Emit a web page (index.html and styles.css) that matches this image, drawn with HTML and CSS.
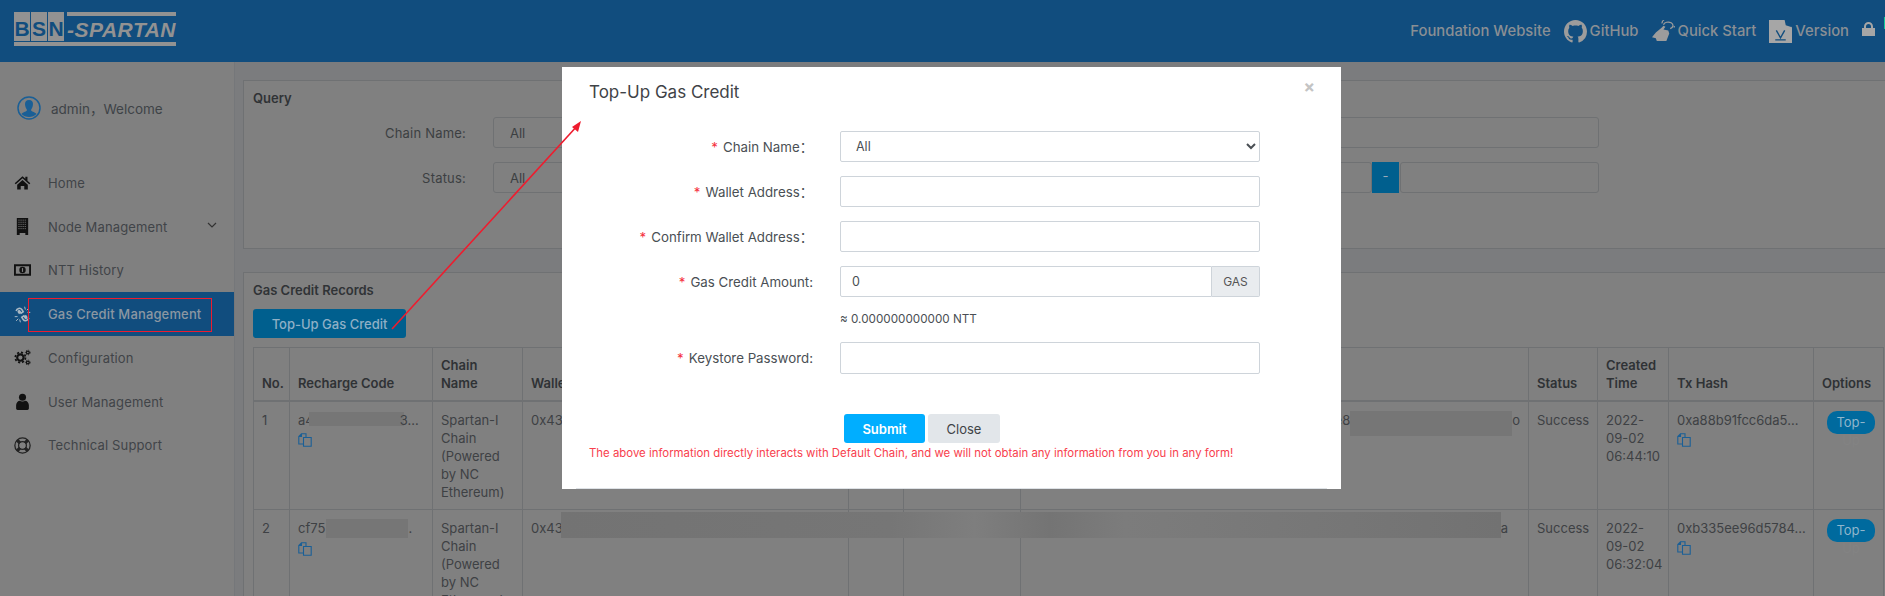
FILE: index.html

```html
<!DOCTYPE html>
<html lang="en">
<head>
<meta charset="UTF-8">
<title>BSN Spartan - Gas Credit Management</title>
<meta name="viewport" content="width=device-width, initial-scale=1.0">
<link rel="stylesheet" href="styles.css">
</head>
<body>
<header class="topbar">
  <div class="logo">
    <div class="logo-top">
      <span class="logo-box">B</span><span class="logo-box">S</span><span class="logo-box">N</span>
      <span class="logo-name">-SPARTAN</span>
    </div>
  </div>
  <nav class="toplinks">
    <a class="toplink">Foundation Website</a>
    <a class="toplink">
      <svg class="topicon" viewBox="0 0 16 16"><path fill="#9c9c9c" d="M8 0C3.58 0 0 3.58 0 8c0 3.54 2.29 6.53 5.47 7.59.4.07.55-.17.55-.38 0-.19-.01-.82-.01-1.49-2.01.37-2.53-.49-2.69-.94-.09-.23-.48-.94-.82-1.13-.28-.15-.68-.52-.01-.53.63-.01 1.08.58 1.23.82.72 1.21 1.87.87 2.33.66.07-.52.28-.87.51-1.07-1.78-.2-3.64-.89-3.64-3.95 0-.87.31-1.59.82-2.15-.08-.2-.36-1.02.08-2.12 0 0 .67-.21 2.2.82.64-.18 1.32-.27 2-.27.68 0 1.36.09 2 .27 1.53-1.04 2.2-.82 2.2-.82.44 1.1.16 1.92.08 2.12.51.56.82 1.27.82 2.15 0 3.07-1.87 3.75-3.65 3.95.29.25.54.73.54 1.48 0 1.07-.01 1.93-.01 2.2 0 .21.15.46.55.38A8.013 8.013 0 0016 8c0-4.42-3.58-8-8-8z"/></svg>
      GitHub
    </a>
    <a class="toplink">
      <svg class="topicon" viewBox="0 0 24 24"><path fill="#9c9c9c" d="M0 18l4-5 6-5 2-2 2 1-2 3 5 1 1 3-3 8H5l-1-3z"/><path fill="none" stroke="#9c9c9c" stroke-width="1.3" d="M12 5a5 3.6 0 1 1 7 4M10.500 3.500a8 5 0 1 1 12 4"/></svg>
      Quick Start
    </a>
    <a class="toplink">
      <svg class="topicon" viewBox="0 0 22 22"><path fill="#a6a6a6" d="M0 0h15l7 7v15H0z"/><path fill="#114d7e" d="M15 0l1 5 6 2-1-2-4-5z"/><path fill="none" stroke="#114d7e" stroke-width="1.300" d="M7 10l4 7 4-7M6 19h10"/></svg>
      Version
    </a>
    <svg class="lock" viewBox="0 0 13 14"><path fill="#a6a6a6" d="M0 6h13v8H0z"/><path fill="none" stroke="#a6a6a6" stroke-width="2" d="M3 7V4.500a3.500 3.500 0 0 1 7 0V7"/></svg>
  </nav>
  <span class="edge-mark"></span>
</header>

<div class="page">
  <aside class="sidebar">
    <div class="welcome">
      <svg class="avatar" viewBox="0 0 24 24"><circle cx="12" cy="12" r="11" fill="none" stroke="#1a5f96" stroke-width="1.500"/><path fill="#1a5f96" d="M12 4c-3 0-4 2-4 4 0 3 1.500 5 2 6 0 1.500-4 2-5.500 4 3.500 4 11.500 4 15 0-1.500-2-5.500-2.500-5.500-4 .5-1 2-3 2-6 0-2-1-4-4-4z"/></svg>
      <span>admin，Welcome</span>
    </div>
    <ul class="menu">
      <li class="menu-item">
        <svg class="menu-icon" viewBox="0 0 24 24"><path fill="#111" d="M12 3L1 13l1.500 1.500L12 6l9.500 8.500L23 13l-4-3.600V4h-3v2.700z"/><path fill="#111" d="M4.500 15L12 8.300l7.500 6.700v7h-5v-5h-5v5h-5z"/></svg>
        Home
      </li>
      <li class="menu-item">
        <svg class="menu-icon" viewBox="0 0 24 24"><path fill="#111" d="M4 0h16v24h-4v-3H8v3H4z"/><path fill="none" stroke="#808080" stroke-dasharray="2 1" d="M6 3h12M6 6h12M6 9h12M6 12h12M6 15h12"/></svg>
        Node Management
        <svg class="chevron" viewBox="0 0 10 6"><path fill="none" stroke="#333" stroke-width="1.200" d="M1 1l4 4 4-4"/></svg>
      </li>
      <li class="menu-item">
        <svg class="menu-icon menu-icon-wide" viewBox="0 0 18 12"><path fill="#111" d="M0 0h18v12H0zm2 2v8h14V2z"/><circle cx="9" cy="6" r="3.400" fill="#111"/><path fill="#808080" d="M8.400 4h1.200v4H8.400z"/></svg>
        NTT History
      </li>
      <li class="menu-item menu-item-active">
        <svg class="menu-icon" viewBox="0 0 24 24"><path fill="none" stroke="#a9b8c4" stroke-width="2.200" d="M3 7c1-4 6-5 8-2l2 3-3 2-2-3c-1-1-2 0-2 1l2 3M21 17c-1 4-6 5-8 2l-2-3 3-2 2 3c1 1 2 0 2-1l-2-3"/><path fill="none" stroke="#a9b8c4" stroke-width="1.400" d="M15 1l1 4M21 3l-3 3M23 9l-4 0M1 15l4 0M3 21l3-3M9 23l-1-4"/></svg>
        Gas Credit Management
      </li>
      <li class="menu-item">
        <svg class="menu-icon" viewBox="0 0 24 24"><circle cx="9" cy="12" r="4.500" fill="none" stroke="#111" stroke-width="3"/><circle cx="9" cy="12" r="7.200" fill="none" stroke="#111" stroke-width="2.400" stroke-dasharray="3 2.650"/><circle cx="19.500" cy="5" r="2" fill="none" stroke="#111" stroke-width="1.800"/><circle cx="19.500" cy="19" r="2" fill="none" stroke="#111" stroke-width="1.800"/><circle cx="19.500" cy="5" r="3.400" fill="none" stroke="#111" stroke-width="1" stroke-dasharray="1.500 1.500"/><circle cx="19.500" cy="19" r="3.400" fill="none" stroke="#111" stroke-width="1" stroke-dasharray="1.500 1.500"/></svg>
        Configuration
      </li>
      <li class="menu-item">
        <svg class="menu-icon" viewBox="0 0 24 24"><circle cx="12" cy="6" r="5" fill="#111"/><path fill="#111" d="M5 24c-1 0-2-1-2-2v-5c0-3 3-6 5-6 2 1.500 6 1.500 8 0 2 0 5 3 5 6v5c0 1-1 2-2 2z"/></svg>
        User Management
      </li>
      <li class="menu-item">
        <svg class="menu-icon" viewBox="0 0 24 24"><circle cx="12" cy="12" r="10.800" fill="none" stroke="#222" stroke-width="1.800"/><circle cx="12" cy="12" r="5.500" fill="none" stroke="#222" stroke-width="1.800"/><path stroke="#222" stroke-width="4.500" d="M4.500 4.500l4 4M19.500 4.500l-4 4M4.500 19.500l4-4M19.500 19.500l-4-4"/></svg>
        Technical Support
      </li>
    </ul>
  </aside>

  <main class="main">
    <section class="card query-card">
      <h3 class="card-title">Query</h3>
      <div class="query-row">
        <label class="query-label">Chain Name:</label>
        <input class="query-field" value="All" readonly>
      </div>
      <div class="query-row">
        <label class="query-label">Status:</label>
        <input class="query-field" value="All" readonly>
        <span class="range-dash">-</span>
        <input class="query-field query-end" readonly>
      </div>
    </section>

    <section class="card records-card">
      <h3 class="card-title">Gas Credit Records</h3>
      <button class="topup-btn">Top-Up Gas Credit</button>
      <div class="table-wrap">
        <table class="records">
          <colgroup>
            <col class="c-no"><col class="c-code"><col class="c-chain"><col class="c-wallet"><col class="c-a"><col class="c-b"><col class="c-c"><col class="c-status"><col class="c-time"><col class="c-hash"><col class="c-opt">
          </colgroup>
          <thead>
            <tr>
              <th>No.</th><th>Recharge Code</th><th>Chain<br>Name</th><th>Wallet Address</th><th></th><th></th><th></th><th>Status</th><th>Created<br>Time</th><th>Tx Hash</th><th>Options</th>
            </tr>
          </thead>
          <tbody>
            <tr>
              <td>1</td>
              <td>a4<span class="smudge smudge-a"></span>3…
                <svg class="copy" viewBox="0 0 14 14"><path fill="none" stroke="#1a5f96" stroke-width="1.100" d="M5 11H.8V3.500L3.500.8H8V4M5.500 4.500h3l4.700 0v8.700H5.500zM3.500.8v2.700H.8"/></svg>
              </td>
              <td>Spartan-I<br>Chain<br>(Powered<br>by NC<br>Ethereum)</td>
              <td>0x43</td><td></td><td></td>
              <td class="cell-end">ee8<span class="smudge smudge-b"></span>o</td>
              <td>Success</td>
              <td>2022-<br>09-02<br>06:44:10</td>
              <td>0xa88b91fcc6da5...
                <svg class="copy" viewBox="0 0 14 14"><path fill="none" stroke="#1a5f96" stroke-width="1.100" d="M5 11H.8V3.500L3.500.8H8V4M5.500 4.500h3l4.700 0v8.700H5.500zM3.500.8v2.700H.8"/></svg>
              </td>
              <td class="cell-opt"><a class="pill-btn">Top-<br><span class="pill-rest">Up</span></a></td>
            </tr>
            <tr>
              <td>2</td>
              <td>cf75<span class="smudge smudge-c"></span>.
                <svg class="copy" viewBox="0 0 14 14"><path fill="none" stroke="#1a5f96" stroke-width="1.100" d="M5 11H.8V3.500L3.500.8H8V4M5.500 4.500h3l4.700 0v8.700H5.500zM3.500.8v2.700H.8"/></svg>
              </td>
              <td>Spartan-I<br>Chain<br>(Powered<br>by NC<br>Ethereum)</td>
              <td>0x43</td><td></td><td></td>
              <td class="cell-end cell-end-2">a</td>
              <td>Success</td>
              <td>2022-<br>09-02<br>06:32:04</td>
              <td>0xb335ee96d5784...
                <svg class="copy" viewBox="0 0 14 14"><path fill="none" stroke="#1a5f96" stroke-width="1.100" d="M5 11H.8V3.500L3.500.8H8V4M5.500 4.500h3l4.700 0v8.700H5.500zM3.500.8v2.700H.8"/></svg>
              </td>
              <td class="cell-opt"><a class="pill-btn">Top-<br><span class="pill-rest">Up</span></a></td>
            </tr>
          </tbody>
        </table>
        <div class="row-smudge"></div>
      </div>
    </section>
  </main>
</div>

<div class="modal">
  <h2 class="modal-title">Top-Up Gas Credit</h2>
  <span class="modal-close">×</span>
  <form class="modal-form">
    <label class="form-label"><i>*</i>Chain Name：</label>
    <select class="form-field"><option>All</option></select>

    <label class="form-label"><i>*</i>Wallet Address：</label>
    <input class="form-field">

    <label class="form-label"><i>*</i>Confirm Wallet Address：</label>
    <input class="form-field">

    <label class="form-label"><i>*</i>Gas Credit Amount:</label>
    <div class="input-group">
      <input class="form-field group-input" value="0">
      <span class="group-addon">GAS</span>
    </div>

    <span></span>
    <div class="form-hint">≈ 0.000000000000 NTT</div>

    <label class="form-label"><i>*</i>Keystore Password:</label>
    <input class="form-field form-field-tall" type="password">
  </form>
  <div class="modal-actions">
    <button class="btn-submit">Submit</button>
    <button class="btn-close">Close</button>
  </div>
  <p class="modal-note">The above information directly interacts with Default Chain, and we will not obtain any information from you in any form!</p>
  <div class="modal-rule"></div>
</div>

<svg class="markup" viewBox="0 0 1885 596">
  <rect x="28.500" y="298.500" width="183" height="33" fill="none" stroke="#ee1c2e" stroke-width="1"/>
  <line x1="392" y1="329" x2="578" y2="125" stroke="#ee1c2e" stroke-width="1.600"/>
  <path fill="#ee1c2e" d="M581 121l-3 11-6-5z"/>
</svg>
</body>
</html>
```

FILE: styles.css

```css
html,body{margin:0;height:596px;overflow:hidden}
body{font-family:Inter,"Noto Sans CJK SC",sans-serif;font-size:13px;color:#3c3f42;background:#808080}

/* top bar */
.topbar{height:62px;background:#114d7e;display:flex;align-items:center;justify-content:space-between;padding:0 10px 0 14px;box-sizing:border-box;position:relative}
.logo{width:162px;height:34px;border-bottom:4px solid #929292;box-sizing:border-box;margin-top:-4px}
.logo-top{display:flex;height:29px;gap:1px}
.logo-box{width:17.500px;background:#929292;color:#114d7e;font:bold 21px/33px "Liberation Sans",sans-serif;text-align:center}
.logo-name{margin-left:2px;flex:1;border-top:4px solid #929292;color:#929292;font:italic bold 21px/27px "Liberation Sans",sans-serif;letter-spacing:.5px;white-space:nowrap}
.toplinks{display:flex;align-items:center;gap:13px;color:#8a8f94;font-size:14.800px;font-weight:500}
.toplink{display:flex;align-items:center;gap:3px;white-space:nowrap}
.topicon{width:23px;height:23px}
.lock{width:13px;height:14px;margin-top:-5px}
.edge-mark{position:absolute;right:0;top:17px;width:1px;height:12px;background:#12c89a}

/* layout */
.page{display:flex;height:534px}
.sidebar{width:234px;flex:none;background:#808080;border-right:1px solid #75777a}
.welcome{display:flex;align-items:center;gap:10px;padding:31px 0 0 17px;height:29px;color:#3e4347;font-size:13.500px}
.avatar{width:24px;height:24px}
.menu{list-style:none;margin:39px 0 0;padding:0}
.menu-item{height:43.750px;display:flex;align-items:center;padding-left:14px;color:#404448;font-size:13px;letter-spacing:.15px;position:relative;white-space:nowrap}
.menu-item-active{background:#114d7e;color:#8b97a2;font-weight:500}
.menu-icon{width:17px;height:17px;margin-right:17px;flex:none}
.menu-icon-wide{width:17px;height:12px}
.chevron{position:absolute;left:207px;top:17px;width:10px;height:6px}

.main{width:1651px;flex:none;background:#7b7c7e;padding:18px 0 0 8px}
.card{background:#808080;border:1px solid #6f7173;box-sizing:border-box;margin-bottom:23px}
.card-title{margin:0;font-size:13px;font-weight:600;line-height:18px;color:#303336}

/* query */
.query-card{height:169px;padding:8px 0 0 9px}
.query-card .card-title{margin-bottom:10px}
.query-row{display:flex;align-items:center;margin-bottom:14px;height:31px}
.query-label{width:213px;text-align:right;margin-right:27px;flex:none;color:#3c3f42;font-size:13px;letter-spacing:.2px}
.query-field{flex:none;width:1106px;height:31px;box-sizing:border-box;border:1px solid #6f7173;border-radius:3px;background:#808080;padding:0 16px;font:13px Inter,sans-serif;color:#3c3f42;outline:none}
.range-dash{width:27px;height:31px;background:#005f8e;color:#9ab;line-height:28px;text-align:center;flex:none;margin-right:1px}
.query-row:last-child .query-field{width:879px}
.query-row:last-child .query-end{width:199px}

/* records */
.records-card{height:400px;padding:8px 0 0 9px}
.topup-btn{display:block;margin-top:10px;width:153px;height:29px;border:none;border-radius:3px;background:#005f8e;color:#8fb0c6;font:500 13px Inter,sans-serif}
.table-wrap{position:relative;margin-top:9px;width:1630px}
.records{width:1630px;table-layout:fixed;border-collapse:collapse;line-height:18px;font-size:13px}
.records th,.records td{border:1px solid #6f7173;text-align:left;vertical-align:top;color:#3e4144;font-weight:400;white-space:nowrap}
.records th{padding:8px;vertical-align:bottom;font-weight:600;color:#2f3235;border-bottom:2px solid #6f7173;overflow:hidden}
.records td{padding:9px 8px 8px}
.c-no{width:36px}.c-code{width:143px}.c-chain{width:90px}.c-wallet{width:326px}.c-a{width:55px}.c-b{width:117px}.c-c{width:508px}.c-status{width:69px}.c-time{width:71px}.c-hash{width:145px}.c-opt{width:70px}
.copy{display:block;width:14px;height:14px;margin-top:4px}
.smudge{display:inline-block;background:#767676;vertical-align:top}
.smudge-a{width:95px;height:14px;margin:1px -4px 0 -5px}
.smudge-b{width:162px;height:25px}
.smudge-c{width:82px;height:19px;margin-left:1px}
.records td.cell-end{text-align:right}
.records td.cell-end-2{padding-right:20px}
.records td.cell-opt{padding:9px 0 0 13px}
.pill-btn{display:block;width:48px;height:23px;box-sizing:border-box;border-radius:10px;background:#006a9e;color:#8fb6cc;line-height:18px;padding-top:2px;text-align:center}
.pill-rest{color:#838383}
.row-smudge{position:absolute;left:308px;top:165px;width:940px;height:26px;background:linear-gradient(90deg,#737373 0,#767676 35%,#7e7e7e 44%,#747474 52%,#7c7c7c 60%,#727272 100%)}

/* modal */
.modal{position:absolute;left:562px;top:67px;width:779px;height:422px;background:#fff;box-sizing:border-box;padding:13px 27px 0;color:#4a4f54}
.modal-title{margin:0;font-size:17px;line-height:24px;font-weight:400;color:#3f4347}
.modal-close{position:absolute;right:26px;top:12px;font-size:17px;line-height:16px;font-weight:700;color:#c4c4c4}
.modal-form{display:grid;grid-template-columns:224px 420px;column-gap:27px;row-gap:14px;margin-top:27px;align-items:center}
.form-label{text-align:right;font-size:13.300px;color:#4a4f54;white-space:nowrap}
.form-label i{color:#f5333f;font-style:normal;margin-right:5px}
.form-field{height:31px;width:420px;box-sizing:border-box;border:1px solid #ced4da;border-radius:2px;background:#fff;padding:0 12px 0 11px;font:12.500px Inter,sans-serif;color:#4a4f54;outline:none}
.form-field-tall{height:32px}
.input-group{display:flex}
.group-input{width:372px;border-radius:2px 0 0 2px}
.group-addon{width:48px;height:31px;box-sizing:border-box;background:#e9ecef;border:1px solid #ced4da;border-left:none;border-radius:0 2px 2px 0;text-align:center;line-height:29px;font-size:12px;color:#555}
.form-hint{height:17px;line-height:17px;font-size:11.700px;color:#4a4f54}
.modal-actions{display:flex;gap:3px;margin:40px 0 0 255px}
.btn-submit,.btn-close{height:29px;border:none;border-radius:3px;font:13px Inter,sans-serif}
.btn-submit{width:81px;background:#00aeff;color:#fff;font-weight:600}
.btn-close{width:72px;background:#e2e6ea;color:#3f4347}
.modal-note{margin:2px 0 0;font-size:11.400px;line-height:16px;color:#f8404d;white-space:nowrap}
.modal-rule{position:absolute;left:14px;right:14px;bottom:0;height:1px;background:#dee2e6}

.markup{position:absolute;left:0;top:0;width:1885px;height:596px;pointer-events:none}
```
